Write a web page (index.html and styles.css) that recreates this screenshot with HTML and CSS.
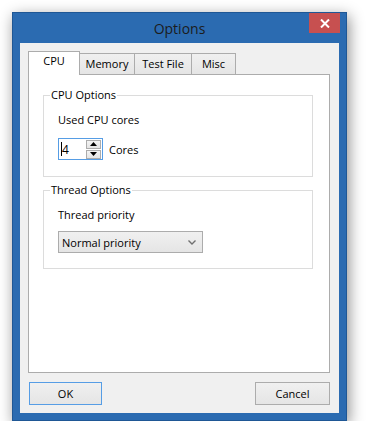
FILE: index.html
```html
<!DOCTYPE html>
<html>
<head>
<meta charset="utf-8">
<link rel="stylesheet" href="styles.css">
</head>
<body>
<div class="window">
  <div class="titlebar">
    <span class="title">Options</span>
    <div class="close">
      <svg width="10" height="9" viewBox="0 0 10 9"><path d="M1 0.5 L9 8.5 M9 0.5 L1 8.5" stroke="#fff" stroke-width="2" fill="none"/></svg>
    </div>
  </div>
  <div class="client">
    <div class="tabs">
      <div class="tab active t-cpu">CPU</div>
      <div class="tab t-mem">Memory</div>
      <div class="tab t-test">Test File</div>
      <div class="tab t-misc">Misc</div>
    </div>
    <div class="panel">
      <fieldset class="group g1">
        <legend>CPU Options</legend>
        <div class="label">Used CPU cores</div>
        <div class="spinrow">
          <div class="spin">
            <span class="caret"></span><span class="val">4</span>
            <div class="arrows">
              <div class="arr up"><svg width="7" height="4" viewBox="0 0 7 4"><path d="M0 4 L3.5 0 L7 4 Z" fill="#000"/></svg></div>
              <div class="arr down"><svg width="7" height="4" viewBox="0 0 7 4"><path d="M0 0 L3.5 4 L7 0 Z" fill="#000"/></svg></div>
            </div>
          </div>
          <span class="unit">Cores</span>
        </div>
      </fieldset>
      <fieldset class="group g2">
        <legend>Thread Options</legend>
        <div class="label">Thread priority</div>
        <div class="combo">
          <span>Normal priority</span>
          <svg width="8" height="5" viewBox="0 0 8 5"><path d="M0.5 0.5 L4 4 L7.5 0.5" stroke="#707070" stroke-width="1.4" fill="none"/></svg>
        </div>
      </fieldset>
    </div>
    <div class="buttons">
      <div class="btn ok">OK</div>
      <div class="btn cancel">Cancel</div>
    </div>
  </div>
</div>
</body>
</html>
```
FILE: styles.css
```css
html, body {
  margin: 0;
  padding: 0;
  background: #ffffff;
}
body {
  font-family: "Open Sans", "Noto Sans", sans-serif;
  font-size: 11px;
  color: #000;
}
.window {
  position: relative;
  margin: 12px 0 0 12px;
  width: 335px;
  height: 409px;
  box-sizing: border-box;
  background: #2b6bb1;
  border: 1px solid #1f5795;
  box-shadow: 2px 4px 14px rgba(0, 0, 0, 0.45);
  display: flex;
  flex-direction: column;
}
.titlebar {
  height: 30px;
  display: flex;
  align-items: center;
  justify-content: center;
}
.title {
  font-family: "Open Sans", "Noto Sans", sans-serif;
  font-size: 14px;
  color: #1c1c1c;
  margin-top: 0px;
}
.close {
  position: absolute;
  top: 0;
  right: 6px;
  width: 31px;
  height: 20px;
  background: #c75050;
  display: flex;
  align-items: center;
  justify-content: center;
}
.client {
  margin: 0 7px 7px 7px;
  flex: 1;
  background: #f0f0f0;
  display: flex;
  flex-direction: column;
  padding: 8px 0 0 8px;
}
.tabs {
  display: flex;
  align-items: flex-end;
  height: 23px;
  position: relative;
  z-index: 2;
}
.tab {
  box-sizing: border-box;
  height: 21px;
  border: 1px solid #acacac;
  border-bottom: none;
  background: linear-gradient(#f0f0f0, #e5e5e5);
  display: flex;
  justify-content: center;
  padding-top: 1px;
  line-height: 17px;
  margin-left: -1px;
}
.tab.active {
  height: 24px;
  margin-bottom: -1px;
  background: #fff;
  padding-top: 0px;
  margin-left: 0;
}
.t-cpu { width: 52px; }
.t-mem { width: 56px; }
.t-test { width: 58px; }
.t-misc { width: 45px; }
.panel {
  box-sizing: border-box;
  width: 302px;
  height: 299px;
  background: #fff;
  border: 1px solid #acacac;
  padding: 12px 0 0 14px;
}
.group {
  box-sizing: border-box;
  width: 270px;
  margin: 0;
  padding: 0 0 0 14px;
  border: 1px solid #dcdcdc;
}
.group legend {
  padding: 0 1px;
  margin-left: -8px;
  line-height: 16px;
}
.g1 { height: 90px; }
.g2 { height: 87px; margin-top: 5px; }
.label {
  line-height: 16px;
  margin-top: 9px;
}
.spinrow {
  display: flex;
  align-items: center;
  margin-top: 10px;
}
.spin {
  box-sizing: border-box;
  width: 45px;
  height: 22px;
  border: 1px solid #569de5;
  background: #fff;
  display: flex;
  align-items: center;
  position: relative;
}
.caret {
  width: 1px;
  height: 14px;
  background: #000;
  margin-left: 2px;
}
.val {
  margin-left: 0px;
  font-size: 12px;
}
.arrows {
  margin-left: auto;
  margin-right: 1px;
  display: flex;
  flex-direction: column;
  gap: 1px;
}
.arr {
  box-sizing: border-box;
  width: 15px;
  height: 9px;
  border: 1px solid #acacac;
  background: linear-gradient(#f4f4f4, #e4e4e4);
  display: flex;
  align-items: center;
  justify-content: center;
}
.unit {
  margin-left: 6px;
}
.combo {
  box-sizing: border-box;
  margin-top: 8px;
  width: 145px;
  height: 22px;
  border: 1px solid #acacac;
  background: linear-gradient(#f0f0f0, #e5e5e5);
  display: flex;
  align-items: center;
  justify-content: space-between;
  padding: 0 6px 0 3px;
}
.buttons {
  display: flex;
  justify-content: space-between;
  margin: 9px 9px 0 1px;
}
.btn {
  box-sizing: border-box;
  height: 23px;
  border: 1px solid #acacac;
  background: linear-gradient(#f0f0f0, #e5e5e5);
  display: flex;
  align-items: center;
  justify-content: center;
}
.btn.ok {
  width: 73px;
  border-color: #569de5;
}
.btn.cancel {
  width: 75px;
}
```
